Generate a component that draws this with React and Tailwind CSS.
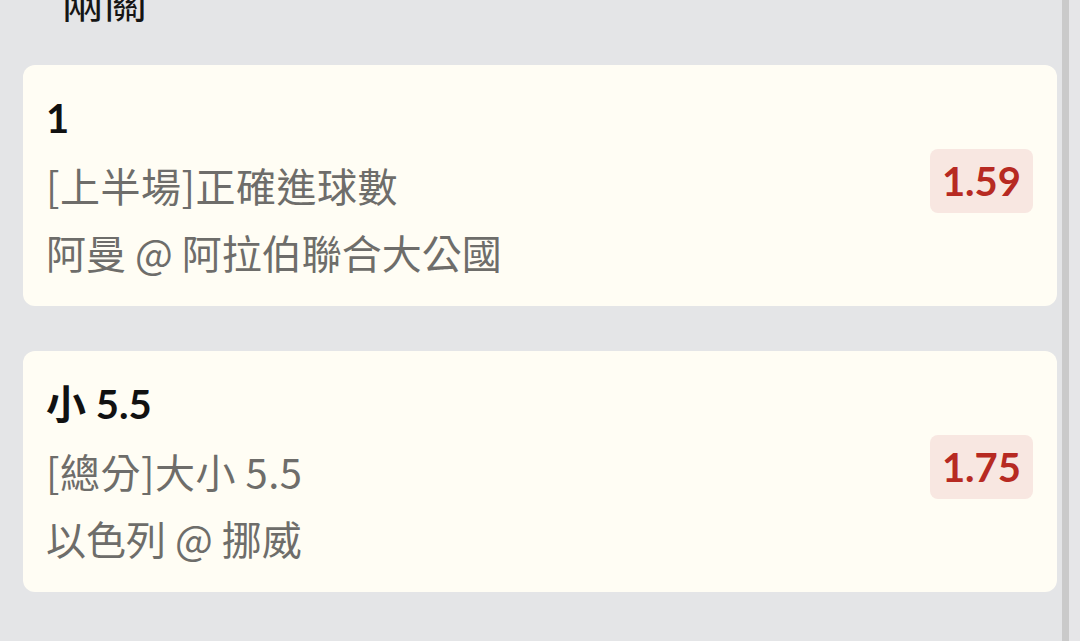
import React from "react";

const bets = [
  { pick: "1", market: "[上半場]正確進球數", match: "阿曼 @ 阿拉伯聯合大公國", odds: "1.59" },
  { pick: "小 5.5", market: "[總分]大小 5.5", match: "以色列 @ 挪威", odds: "1.75" },
];

const cjk = { fontFamily: "'Noto Sans CJK TC', 'Noto Sans', sans-serif" };

function BetCard({ bet }) {
  return (
    <div className="flex items-center justify-between rounded-[12px] bg-[#fffdf4] pl-[23px] pr-[24px] py-[20px]">
      <div className="flex flex-col leading-[67px]">
        <div className="text-[40px] font-bold text-[#111111]">{bet.pick}</div>
        <div className="text-[40px] font-normal tracking-[0.5px] text-[#6e6d6a]" style={cjk}>
          {bet.market}
        </div>
        <div className="text-[40px] font-normal text-[#6e6d6a]" style={cjk}>
          {bet.match}
        </div>
      </div>
      <div className="mb-[10px] flex h-[64px] items-center rounded-[8px] bg-[#f8e7e1] px-[12px] text-[40px] font-bold text-[#b72a22]">
        {bet.odds}
      </div>
    </div>
  );
}

export default function App() {
  return (
    <div
      className="flex h-[641px] w-[1080px] overflow-hidden bg-[#e4e5e7]"
      style={{ fontFamily: "Lato, 'Noto Sans CJK TC', sans-serif" }}
    >
      <div className="flex flex-1 flex-col pl-[23px] pr-[5px]">
        <div
          className="-mt-[22px] h-[43px] pl-[38px] text-[43px] font-normal leading-[43px] text-[#151515]"
          style={cjk}
        >
          兩關
        </div>
        <div className="mt-[44px] flex flex-col gap-[45px]">
          {bets.map((bet) => (
            <BetCard key={bet.odds} bet={bet} />
          ))}
        </div>
      </div>
      <div className="w-[7px] bg-[#cacaca]" />
      <div className="w-[11px] bg-[#e6e6e8]" />
    </div>
  );
}
